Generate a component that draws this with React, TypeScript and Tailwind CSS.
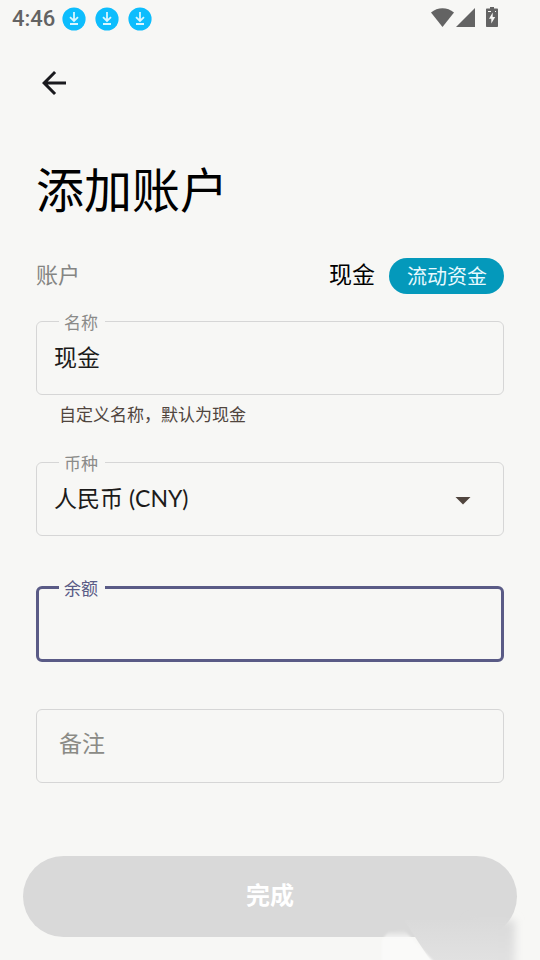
import { useState } from "react";
import type { ReactNode } from "react";

function DownloadBadge() {
  return (
    <svg viewBox="0 0 24 24" className="h-6 w-6" aria-hidden="true">
      <circle cx="12" cy="12" r="11.6" fill="#0dbdfd" />
      <path d="M12 5v8.500M8 10.200l4 3.800 4-3.800M8 17h8" fill="none" stroke="#d9f6ff" strokeWidth="1.8" />
    </svg>
  );
}

function StatusBar() {
  return (
    <div className="flex h-[37px] items-center justify-between pr-[42px] pl-3 text-[#636363]">
      <div className="flex items-center gap-[9px]">
        <span className="mr-[-2px] font-['Roboto',sans-serif] text-[22px] leading-8 font-medium">4:46</span>
        <DownloadBadge />
        <DownloadBadge />
        <DownloadBadge />
      </div>
      <div className="flex items-center gap-[2px] pb-[3px]" aria-hidden="true">
        <svg viewBox="0 0 23 20" className="h-5 w-[23px]" fill="currentColor">
          <path d="M0 5.500C6.600-.3 16.400-.3 23 5.500L11.500 20z" />
        </svg>
        <svg viewBox="0 0 20 20" className="h-5 w-5" fill="currentColor">
          <path d="M19 1v19H0z" />
        </svg>
        <svg viewBox="0 0 12 20" className="ml-2 h-5 w-3" fill="currentColor">
          <path
            fillRule="evenodd"
            d="M4 0h4v1.600h3c.6 0 1 .4 1 1v16.400c0 .6-.4 1-1 1H1c-.6 0-1-.4-1-1v-16.400c0-.6.4-1 1-1h3zM6.700 5.500 3 11.800h2.300v4.800l3.900-6.600H6.700z"
          />
          <path d="M2 4.500h3M9 4.500h1" stroke="#f7f7f5" strokeWidth="1" />
        </svg>
      </div>
    </div>
  );
}

function OutlinedField({ id, label, active, children }: { id: string; label: string; active?: boolean; children: ReactNode }) {
  return (
    <fieldset
      className={
        active
          ? "rounded-md border-3 border-[#5a5b86] pl-5 text-[#5a5b86]"
          : "rounded-md border border-[#d6d6d6] pl-[22px] text-[#8b8b89]"
      }
    >
      <legend className="pr-[7px] pl-[5px] text-[17px] leading-[21px]">
        <label htmlFor={id}>{label}</label>
      </legend>
      {children}
    </fieldset>
  );
}

// light sheet that spills over the lower right corner of the page
function CornerGlow() {
  return (
    <svg viewBox="0 0 160 60" className="pointer-events-none absolute right-0 bottom-0 h-[60px] w-40" aria-hidden="true">
      <defs>
        <linearGradient id="sheet" gradientUnits="userSpaceOnUse" x1="0" y1="14" x2="0" y2="60">
          <stop offset="0" stopColor="#d9d9d9" />
          <stop offset="1" stopColor="#e1e1e1" />
        </linearGradient>
        <linearGradient id="fade" gradientUnits="userSpaceOnUse" x1="0" y1="30" x2="0" y2="40">
          <stop offset="0" stopColor="#fafaf9" stopOpacity="0" />
          <stop offset="1" stopColor="#fafaf9" />
        </linearGradient>
        <filter id="blur" x="-20%" y="-30%" width="140%" height="160%">
          <feGaussianBlur stdDeviation="4.5" />
        </filter>
        <filter id="soft" x="-20%" y="-20%" width="140%" height="140%">
          <feGaussianBlur stdDeviation="0.8" />
        </filter>
      </defs>
      <path d="M90 20H135V90H80z" fill="url(#sheet)" filter="url(#blur)" />
      <path d="M24 20H118V60H50z" fill="url(#sheet)" />
      <path d="M2 40 8 32 24 30 56 64H2z" fill="url(#fade)" filter="url(#soft)" />
    </svg>
  );
}

export default function App() {
  const [name, setName] = useState("现金");
  const [currency, setCurrency] = useState("CNY");
  const [balance, setBalance] = useState("");
  const [note, setNote] = useState("");

  return (
    <div className="relative min-h-screen overflow-hidden bg-[#f7f7f5] font-['Noto_Sans_CJK_SC',sans-serif] text-black">
      <StatusBar />

      <main className="px-9 pt-7">
        <button type="button" aria-label="返回" className="block text-[#1a1a1e]">
          <svg viewBox="0 0 24 24" className="h-9 w-9" fill="currentColor">
            <path d="M20 11H7.830l5.590-5.590L12 4l-8 8 8 8 1.410-1.410L7.830 13H20v-2z" />
          </svg>
        </button>

        <h1 className="mt-[50px] text-[48px] leading-[72px]">添加账户</h1>

        <div className="mt-[35px] flex h-9 items-center">
          <span className="pb-1.5 text-[22px] leading-8 text-[#858583]">账户</span>
          <span className="mr-3.5 ml-auto pb-1.5 text-[23px] leading-8">现金</span>
          <span className="flex h-9 items-center rounded-full bg-[#0499bb] pr-[17px] pl-[18px] text-[20px] leading-8 text-[#e9faff]">
            流动资金
          </span>
        </div>

        <form id="account" className="mt-[17px]" onSubmit={(e) => e.preventDefault()}>
          <OutlinedField id="name" label="名称">
            <input
              id="name"
              aria-describedby="name-hint"
              value={name}
              onChange={(e) => setName(e.target.value)}
              className="-ml-[5px] block h-[62px] w-full pb-3.5 text-[23px] text-[#1c1b1a] outline-none"
            />
          </OutlinedField>
          <p id="name-hint" className="mt-[7px] pl-[23px] text-[17px] leading-6 text-[#50453e]">
            自定义名称，默认为现金
          </p>

          <div className="mt-[26px]">
            <OutlinedField id="currency" label="币种">
              <div className="relative -ml-[5px]">
                <select
                  id="currency"
                  value={currency}
                  onChange={(e) => setCurrency(e.target.value)}
                  className="block h-[62px] w-full appearance-none pb-3 font-['Lato','Noto_Sans_CJK_SC',sans-serif] text-[23px] text-[#1c1b1a] outline-none"
                >
                  <option value="CNY">人民币 (CNY)</option>
                </select>
                <svg viewBox="0 0 16 8" className="pointer-events-none absolute top-6 right-8 h-2 w-4" fill="#50453e" aria-hidden="true">
                  <path d="M.5 0h15L8 7.500z" />
                </svg>
              </div>
            </OutlinedField>
          </div>

          <div className="mt-[41px]">
            <OutlinedField id="balance" label="余额" active>
              <input
                id="balance"
                inputMode="decimal"
                value={balance}
                onChange={(e) => setBalance(e.target.value)}
                className="-ml-[5px] block h-[61px] w-full text-[23px] text-[#1c1b1a] outline-none"
              />
            </OutlinedField>
          </div>

          <input
            aria-label="备注"
            placeholder="备注"
            value={note}
            onChange={(e) => setNote(e.target.value)}
            className="mt-[47px] block h-[74px] w-full rounded-md border border-[#d6d6d6] px-[22px] pb-2 text-[23px] outline-none placeholder:text-[#8b8b86]"
          />
        </form>
      </main>

      <div className="mt-[73px] px-[23px] pb-[23px]">
        <button
          type="submit"
          form="account"
          disabled
          className="block h-[81px] w-full rounded-full bg-[#d9d9d9] pb-1.5 text-[24px] font-bold text-white"
        >
          完成
        </button>
      </div>

      <CornerGlow />
    </div>
  );
}
